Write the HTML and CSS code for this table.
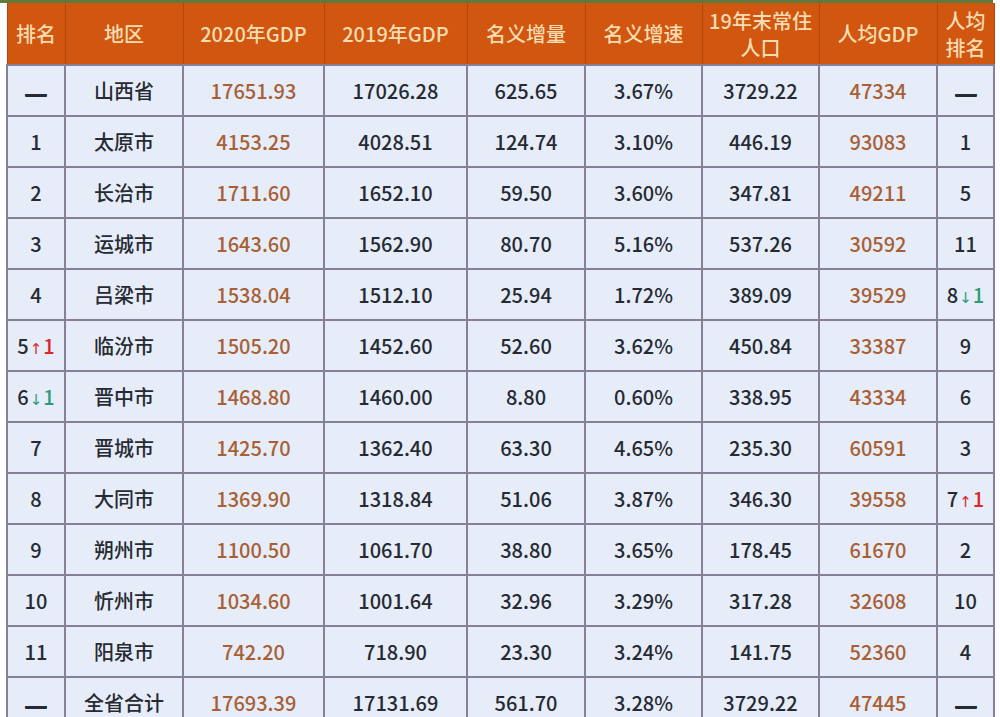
FILE: index.html
```html
<!DOCTYPE html>
<html lang="zh">
<head>
<meta charset="utf-8">
<link rel="stylesheet" href="styles.css">
</head>
<body>
<div class="topbar"></div>
<div class="wrap">
<table class="gdp">
<colgroup>
<col class="c1"><col class="c2"><col class="c3"><col class="c4"><col class="c5"><col class="c6"><col class="c7"><col class="c8"><col class="c9">
</colgroup>
<thead>
<tr>
<th>排名</th><th>地区</th><th>2020年GDP</th><th>2019年GDP</th><th>名义增量</th><th>名义增速</th><th>19年末常住<br>人口</th><th>人均GDP</th><th>人均<br>排名</th>
</tr>
</thead>
<tbody>
<tr><td><span class="dash">—</span></td><td>山西省</td><td class="o">17651.93</td><td>17026.28</td><td>625.65</td><td>3.67%</td><td>3729.22</td><td class="o">47334</td><td><span class="dash">—</span></td></tr>
<tr><td>1</td><td>太原市</td><td class="o">4153.25</td><td>4028.51</td><td>124.74</td><td>3.10%</td><td>446.19</td><td class="o">93083</td><td>1</td></tr>
<tr><td>2</td><td>长治市</td><td class="o">1711.60</td><td>1652.10</td><td>59.50</td><td>3.60%</td><td>347.81</td><td class="o">49211</td><td>5</td></tr>
<tr><td>3</td><td>运城市</td><td class="o">1643.60</td><td>1562.90</td><td>80.70</td><td>5.16%</td><td>537.26</td><td class="o">30592</td><td>11</td></tr>
<tr><td>4</td><td>吕梁市</td><td class="o">1538.04</td><td>1512.10</td><td>25.94</td><td>1.72%</td><td>389.09</td><td class="o">39529</td><td>8<span class="dn"><span class="ar">↓</span>1</span></td></tr>
<tr><td>5<span class="up"><span class="ar">↑</span>1</span></td><td>临汾市</td><td class="o">1505.20</td><td>1452.60</td><td>52.60</td><td>3.62%</td><td>450.84</td><td class="o">33387</td><td>9</td></tr>
<tr><td>6<span class="dn"><span class="ar">↓</span>1</span></td><td>晋中市</td><td class="o">1468.80</td><td>1460.00</td><td>8.80</td><td>0.60%</td><td>338.95</td><td class="o">43334</td><td>6</td></tr>
<tr><td>7</td><td>晋城市</td><td class="o">1425.70</td><td>1362.40</td><td>63.30</td><td>4.65%</td><td>235.30</td><td class="o">60591</td><td>3</td></tr>
<tr><td>8</td><td>大同市</td><td class="o">1369.90</td><td>1318.84</td><td>51.06</td><td>3.87%</td><td>346.30</td><td class="o">39558</td><td>7<span class="up"><span class="ar">↑</span>1</span></td></tr>
<tr><td>9</td><td>朔州市</td><td class="o">1100.50</td><td>1061.70</td><td>38.80</td><td>3.65%</td><td>178.45</td><td class="o">61670</td><td>2</td></tr>
<tr><td>10</td><td>忻州市</td><td class="o">1034.60</td><td>1001.64</td><td>32.96</td><td>3.29%</td><td>317.28</td><td class="o">32608</td><td>10</td></tr>
<tr><td>11</td><td>阳泉市</td><td class="o">742.20</td><td>718.90</td><td>23.30</td><td>3.24%</td><td>141.75</td><td class="o">52360</td><td>4</td></tr>
<tr><td><span class="dash">—</span></td><td>全省合计</td><td class="o">17693.39</td><td>17131.69</td><td>561.70</td><td>3.28%</td><td>3729.22</td><td class="o">47445</td><td><span class="dash">—</span></td></tr>
</tbody>
</table>
</div>
</body>
</html>
```

FILE: styles.css
```css
html, body {
  margin: 0;
  padding: 0;
  background: #ffffff;
  overflow: hidden;
}
body {
  width: 1000px;
  height: 717px;
  font-family: "Noto Sans CJK SC", "Noto Sans", sans-serif;
}
.topbar {
  height: 3px;
  width: 993px;
  background: #5e7b3c;
}
.wrap {
  padding-left: 6px;
}
.gdp {
  border-collapse: collapse;
  table-layout: fixed;
  width: 987px;
}
.c1 { width: 58px; }
.c2 { width: 118px; }
.c3 { width: 141px; }
.c4 { width: 143px; }
.c5 { width: 118px; }
.c6 { width: 117px; }
.c7 { width: 117px; }
.c8 { width: 118px; }
.c9 { width: 57px; }
.gdp th {
  background: #d1560f;
  color: #f7dcb2;
  font-weight: 500;
  font-size: 20px;
  line-height: 27px;
  height: 61px;
  padding: 0;
  border-left: 1px solid #b2470c;
  border-right: 1px solid #b2470c;
  text-align: center;
  vertical-align: middle;
}
.gdp td {
  background: #e6edf8;
  color: #262a32;
  font-size: 20px;
  font-weight: 500;
  height: 49px;
  padding: 0;
  border: 2px solid #877f97;
  text-align: center;
  vertical-align: middle;
  white-space: nowrap;
}
.gdp td.o {
  color: #a85f36;
}
.dash {
  display: inline-block;
  font-size: 22px;
  font-weight: 700;
  transform: scaleX(1.2);
  text-shadow: 0 1px 0 currentColor, 0 -0.5px 0 currentColor;
}
.up { color: #d8262b; }
.dn { color: #2f9a7e; }
.ar {
  font-size: 15px;
  font-family: "DejaVu Sans", sans-serif;
  font-weight: normal;
  margin: 0 1px;
}
```
